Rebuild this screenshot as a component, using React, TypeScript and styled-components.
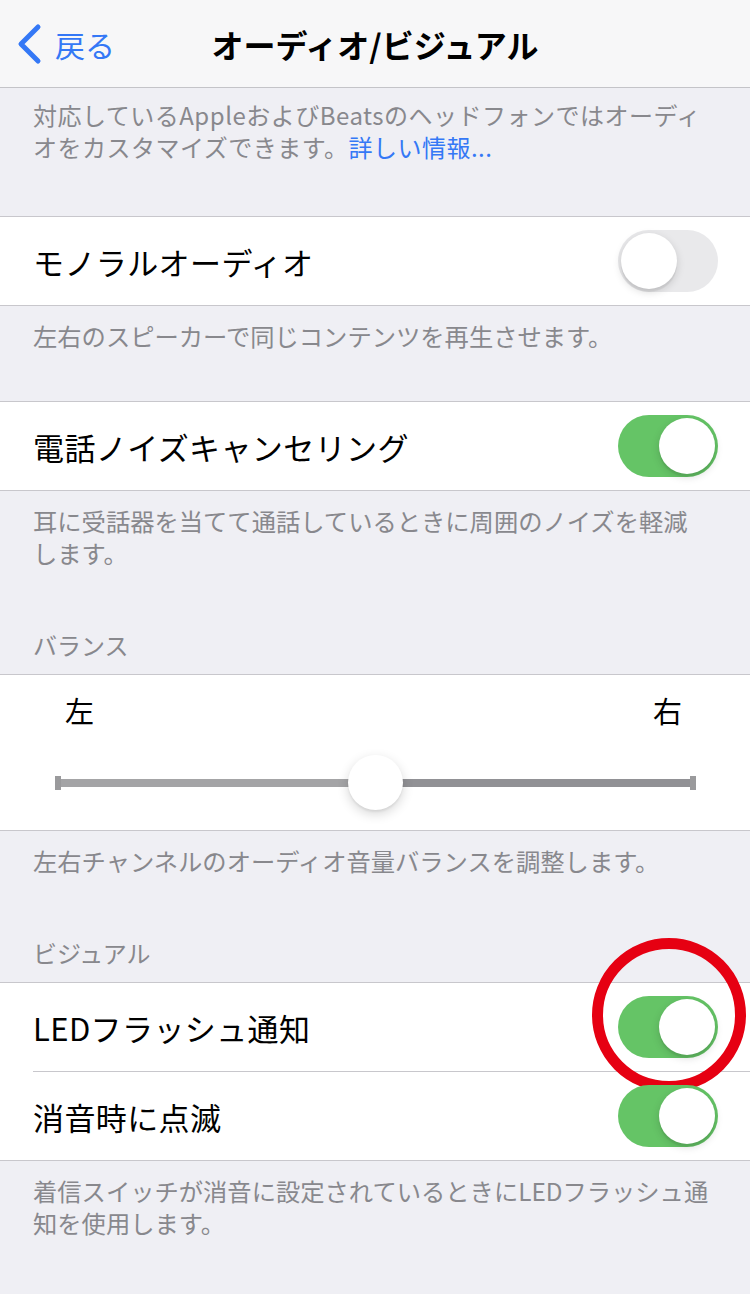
import React from 'react';
import styled, { createGlobalStyle } from 'styled-components';

const GlobalStyle = createGlobalStyle`
  body {
    margin: 0;
    background: #efeff4;
    font-family: "Noto Sans CJK JP", "Noto Sans", sans-serif;
    -webkit-font-smoothing: antialiased;
  }
`;

const Page = styled.div`
  width: 750px;
  min-height: 1294px;
  background: #efeff4;
  overflow: hidden;
`;

const NavBar = styled.div`
  height: 87px;
  display: grid;
  grid-template-columns: 1fr auto 1fr;
  align-items: center;
  background: #f7f7f8;
  border-bottom: 1px solid #c4c4c8;
`;

const BackButton = styled.div`
  display: flex;
  align-items: center;
  gap: 13px;
  padding-left: 16px;
  color: #3478f6;
  font-size: 30px;
  line-height: 1;
`;

const Title = styled.div`
  font-size: 32px;
  font-weight: 700;
  color: #000;
`;

const Note = styled.div<{ $top?: number; $size?: number; $spacing?: number }>`
  padding: ${p => p.$top ?? 14}px 33px 0;
  font-size: ${p => p.$size ?? 24.3}px;
  letter-spacing: ${p => p.$spacing ?? 0}px;
  line-height: 32px;
  color: #88888d;
  white-space: nowrap;
`;

const Link = styled.span`
  color: #3478f6;
`;

const SectionHeader = styled.div<{ $top: number }>`
  padding: ${p => p.$top}px 33px 13px;
  font-size: 24px;
  line-height: 32px;
  color: #88888d;
`;

const Group = styled.div<{ $top: number }>`
  margin-top: ${p => p.$top}px;
  background: #fff;
  border-top: 1px solid #c8c7cc;
  border-bottom: 1px solid #c8c7cc;
`;

const Row = styled.div`
  height: 88px;
  display: flex;
  align-items: center;
  justify-content: space-between;
  padding: 0 32px 0 33px;
`;

const Label = styled.div`
  font-size: 31px;
  color: #000;
  letter-spacing: 0.4px;
`;

const Divider = styled.div`
  height: 1px;
  margin-left: 33px;
  background: #c8c7cc;
`;

const SwitchTrack = styled.div<{ $on: boolean }>`
  position: relative;
  width: 100px;
  height: 62px;
  border-radius: 31px;
  background: ${p => (p.$on ? '#65c466' : '#e9e9eb')};
  display: flex;
  align-items: center;
  justify-content: ${p => (p.$on ? 'flex-end' : 'flex-start')};
  padding: 0 3px;
  box-sizing: border-box;
`;

const SwitchKnob = styled.div`
  width: 56px;
  height: 56px;
  border-radius: 50%;
  background: #fff;
  box-shadow: 0 3px 8px rgba(0, 0, 0, 0.15), 0 3px 1px rgba(0, 0, 0, 0.06);
`;

const Highlight = styled.div`
  position: absolute;
  left: -26px;
  top: -58px;
  width: 154px;
  height: 154px;
  box-sizing: border-box;
  border: 11px solid #e60012;
  border-radius: 50%;
  pointer-events: none;
`;

const BalanceBody = styled.div`
  padding: 17px 0 19px;
`;

const BalanceLabels = styled.div`
  display: flex;
  justify-content: space-between;
  padding: 0 68px 0 65px;
  font-size: 29px;
  line-height: 36px;
  color: #000;
`;

const SliderArea = styled.div`
  position: relative;
  margin: 27px 54px 0 55px;
  height: 56px;
  display: flex;
  align-items: center;
`;

const TrackCap = styled.div`
  width: 6px;
  height: 14px;
  background: #9a9a9c;
`;

const TrackPart = styled.div<{ $color: string }>`
  flex: 1;
  height: 8px;
  background: ${p => p.$color};
`;

const Thumb = styled.div`
  position: absolute;
  left: 293px;
  top: 0;
  width: 55px;
  height: 55px;
  border-radius: 50%;
  background: #fff;
  box-shadow: 0 4px 12px rgba(0, 0, 0, 0.16), 0 2px 2px rgba(0, 0, 0, 0.06);
`;

const Switch: React.FC<{ on: boolean; highlight?: boolean }> = ({ on, highlight }) => (
  <SwitchTrack $on={on}>
    <SwitchKnob />
    {highlight && <Highlight />}
  </SwitchTrack>
);

const Chevron = () => (
  <svg width="26" height="42" viewBox="0 0 26 42">
    <polyline
      points="22,4 5,21 22,38"
      fill="none"
      stroke="#3478f6"
      strokeWidth="5"
      strokeLinecap="round"
      strokeLinejoin="round"
    />
  </svg>
);

export default function App() {
  return (
    <Page>
      <GlobalStyle />
      <NavBar>
        <BackButton>
          <Chevron />
          <span>戻る</span>
        </BackButton>
        <Title>オーディオ/ビジュアル</Title>
        <div />
      </NavBar>

      <Note $top={11} $size={24} $spacing={0.5}>
        対応しているAppleおよびBeatsのヘッドフォンではオーディ
        <br />
        オをカスタマイズできます。<Link>詳しい情報...</Link>
      </Note>

      <Group $top={53}>
        <Row>
          <Label>モノラルオーディオ</Label>
          <Switch on={false} />
        </Row>
      </Group>
      <Note>左右のスピーカーで同じコンテンツを再生させます。</Note>

      <Group $top={49}>
        <Row>
          <Label>電話ノイズキャンセリング</Label>
          <Switch on />
        </Row>
      </Group>
      <Note>
        耳に受話器を当てて通話しているときに周囲のノイズを軽減
        <br />
        します。
      </Note>

      <SectionHeader $top={60}>バランス</SectionHeader>
      <Group $top={0}>
        <BalanceBody>
          <BalanceLabels>
            <span>左</span>
            <span>右</span>
          </BalanceLabels>
          <SliderArea>
            <TrackCap />
            <TrackPart $color="#a4a4a6" />
            <TrackPart $color="#919195" />
            <TrackCap />
            <Thumb />
          </SliderArea>
        </BalanceBody>
      </Group>
      <Note>左右チャンネルのオーディオ音量バランスを調整します。</Note>

      <SectionHeader $top={60}>ビジュアル</SectionHeader>
      <Group $top={0}>
        <Row>
          <Label>LEDフラッシュ通知</Label>
          <Switch on highlight />
        </Row>
        <Divider />
        <Row>
          <Label>消音時に点滅</Label>
          <Switch on />
        </Row>
      </Group>
      <Note>
        着信スイッチが消音に設定されているときにLEDフラッシュ通
        <br />
        知を使用します。
      </Note>
    </Page>
  );
}
